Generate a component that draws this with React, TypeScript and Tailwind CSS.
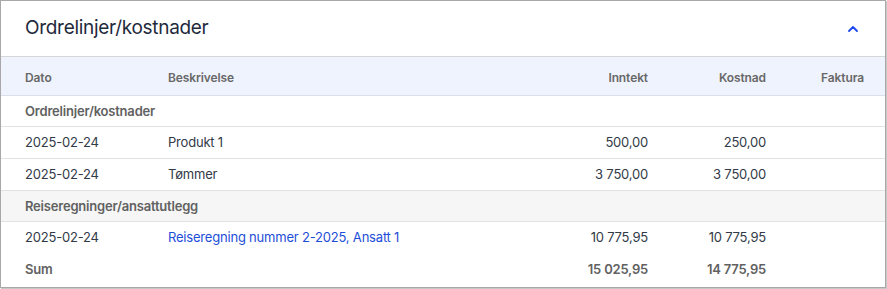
import { ChevronUp } from 'lucide-react';

type Line = {
     dato: string;
     beskrivelse: string;
     inntekt: string;
     kostnad: string;
     link?: boolean;
};

const ordrelinjer: Line[] = [
     { dato: '2025-02-24', beskrivelse: 'Produkt 1', inntekt: '500,00', kostnad: '250,00' },
     { dato: '2025-02-24', beskrivelse: 'Tømmer', inntekt: '3 750,00', kostnad: '3 750,00' },
];

const reiser: Line[] = [
     {
          dato: '2025-02-24',
          beskrivelse: 'Reiseregning nummer 2-2025, Ansatt 1',
          inntekt: '10 775,95',
          kostnad: '10 775,95',
          link: true,
     },
];

const cols = 'grid grid-cols-[143px_1fr_118px_118px_98px] items-center pl-6 pr-[21px]';

const Row = ({ line, border = true }: { line: Line; border?: boolean }) => (
     <div
          className={`${cols} h-[32px] text-[13px] tracking-[-0.2px] text-[#323a48] ${
               border ? 'border-b border-[#e2e2e2]' : ''
          }`}
     >
          <div>{line.dato}</div>
          <div className={line.link ? 'text-[#1d4ed8]' : ''}>{line.beskrivelse}</div>
          <div className="text-right">{line.inntekt}</div>
          <div className="text-right">{line.kostnad}</div>
          <div />
     </div>
);

const GroupRow = ({ label, shaded }: { label: string; shaded?: boolean }) => (
     <div
          className={`flex h-[31px] items-center border-b border-[#e2e2e2] pl-6 pt-px text-[13px] font-semibold tracking-[-0.2px] text-[#616161] ${
               shaded ? 'bg-[#f6f6f6]' : ''
          }`}
     >
          {label}
     </div>
);

export default function App() {
     return (
          <div className="h-[289px] w-[887px] bg-white font-['Inter',sans-serif]">
               <div className="h-[288px] w-[886px] border border-[#a8a8a8] shadow-[1px_1px_0_#c8c8c8]">
                    <div className="flex h-[56px] items-center justify-between border-b border-[#d6d6d6] pl-6 pr-[24px]">
                         <h2 className="text-[19px] tracking-[-0.3px] text-[#1f2a3d]">Ordrelinjer/kostnader</h2>
                         <ChevronUp size={16} strokeWidth={2.75} className="text-[#1a47f0]" />
                    </div>
                    <div
                         className={`${cols} h-[39px] border-b border-[#dcdfe6] bg-[#eff3fd] pt-1 text-[12px] font-semibold tracking-[-0.1px] text-[#686868]`}
                    >
                         <div>Dato</div>
                         <div>Beskrivelse</div>
                         <div className="text-right">Inntekt</div>
                         <div className="text-right">Kostnad</div>
                         <div className="text-right">Faktura</div>
                    </div>
                    <GroupRow label="Ordrelinjer/kostnader" />
                    {ordrelinjer.map((l, i) => (
                         <Row key={i} line={l} />
                    ))}
                    <GroupRow label="Reiseregninger/ansattutlegg" shaded />
                    {reiser.map((l, i) => (
                         <Row key={i} line={l} border={false} />
                    ))}
                    <div className={`${cols} h-[32px] text-[13px] font-semibold tracking-[-0.2px] text-[#616161]`}>
                         <div>Sum</div>
                         <div />
                         <div className="text-right">15 025,95</div>
                         <div className="text-right">14 775,95</div>
                         <div />
                    </div>
               </div>
          </div>
     );
}
